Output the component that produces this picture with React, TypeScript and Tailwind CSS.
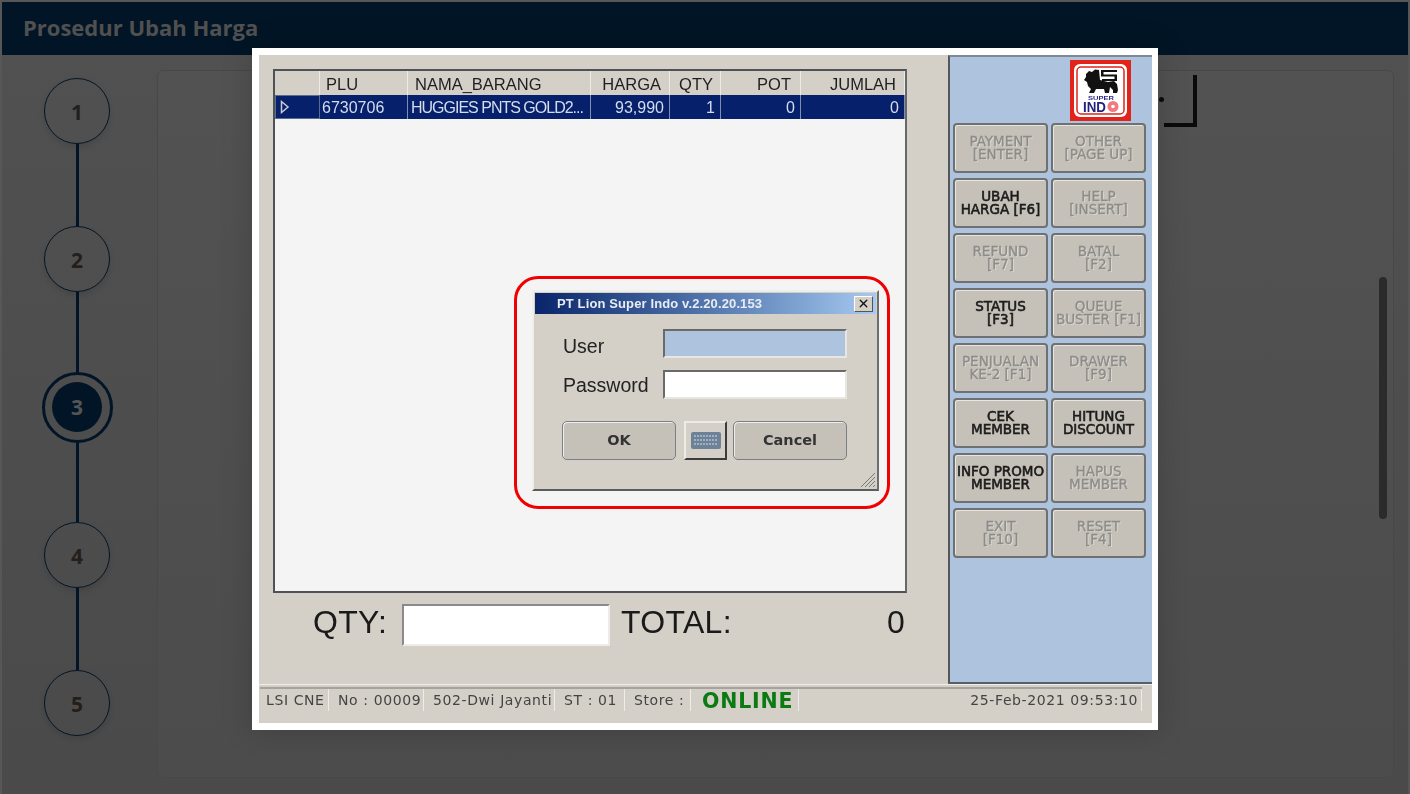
import { X } from "lucide-react";

const steps = [1, 2, 3, 4, 5];

const columns = [
  { label: "PLU", value: "6730706", width: "w-[88px]", head: "text-left pl-[6px]", cell: "text-left pl-[2px] pr-[2px]" },
  { label: "NAMA_BARANG", value: "HUGGIES PNTS GOLD2...", width: "w-[183px]", head: "text-left pl-[7px]", cell: "text-left pl-[3px] tracking-[-1px]" },
  { label: "HARGA", value: "93,990", width: "w-[79px]", head: "text-right pr-[8px]", cell: "text-right pr-[5px]" },
  { label: "QTY", value: "1", width: "w-[51px]", head: "text-right pr-[7px]", cell: "text-right pr-[5px]" },
  { label: "POT", value: "0", width: "w-[80px]", head: "text-right pr-[9px]", cell: "text-right pr-[5px]" },
  { label: "JUMLAH", value: "0", width: "w-[104px]", head: "text-right pr-[8px]", cell: "text-right pr-[5px]" },
];

const buttons = [
  { top: "PAYMENT", bottom: "[ENTER]", on: false },
  { top: "OTHER", bottom: "[PAGE UP]", on: false },
  { top: "UBAH", bottom: "HARGA [F6]", on: true },
  { top: "HELP", bottom: "[INSERT]", on: false },
  { top: "REFUND", bottom: "[F7]", on: false },
  { top: "BATAL", bottom: "[F2]", on: false },
  { top: "STATUS", bottom: "[F3]", on: true },
  { top: "QUEUE", bottom: "BUSTER [F1]", on: false },
  { top: "PENJUALAN", bottom: "KE-2 [F1]", on: false },
  { top: "DRAWER", bottom: "[F9]", on: false },
  { top: "CEK", bottom: "MEMBER", on: true },
  { top: "HITUNG", bottom: "DISCOUNT", on: true },
  { top: "INFO PROMO", bottom: "MEMBER", on: true },
  { top: "HAPUS", bottom: "MEMBER", on: false },
  { top: "EXIT", bottom: "[F10]", on: false },
  { top: "RESET", bottom: "[F4]", on: false },
];

const statusPanes = [
  { text: "LSI CNE", width: "w-[69px] pl-[6px]" },
  { text: "No : 00009", width: "w-[95px] pl-[9px]" },
  { text: "502-Dwi Jayanti", width: "w-[131px] pl-[9px]" },
  { text: "ST : 01", width: "w-[70px] pl-[9px]" },
  { text: "Store :", width: "w-[66px] pl-[9px]" },
];

const Step = ({ n }: { n: number }) => {
  if (n === 3) {
    return (
      <div className="w-[66px] h-[66px] flex items-center justify-center shrink-0">
        <div className="w-[71px] h-[71px] shrink-0 rounded-full border-[3px] border-[#021526] flex items-center justify-center">
          <div className="w-[50px] h-[50px] rounded-full bg-[#021526] flex items-center justify-center pt-[2px] text-[21px] font-bold text-[#545454]">
            3
          </div>
        </div>
      </div>
    );
  }
  return (
    <div className="w-[66px] h-[66px] shrink-0 rounded-full border border-[#021526] shadow-[0_3px_6px_rgba(0,0,0,0.12)] flex items-center justify-center pt-[3px] text-[21px] font-bold text-[#231f1c]">
      {n}
    </div>
  );
};

const Logo = () => (
  <svg width="61" height="61" viewBox="0 0 61 61" className="block">
    <rect width="61" height="61" fill="#e2231a" />
    <rect x="4" y="4" width="53" height="53" rx="6" fill="#ffffff" />
    <rect x="7" y="7" width="47" height="47" rx="4" fill="none" stroke="#e2231a" strokeWidth="1.5" />
    <path
      d="M16 14L19 11L22 12L25 9.500L29 10L30 20L38 22L44 21L47 24L48 30L47 33L43 33L43 30L40 27L39 33L35 33L34 29L26 29L24 33L19 33L21 29L18 26L17 22L14 20L16 17Z"
      fill="#111111"
    />
    <path d="M31 10H47V12H33.500V14.500H47V21H32V19H44.500V16.500H31Z" fill="#111111" />
    <text
      x="18"
      y="39.500"
      fontSize="6"
      fontWeight="700"
      fill="#2a2a86"
      textLength="26"
      lengthAdjust="spacingAndGlyphs"
      fontFamily="Liberation Sans, sans-serif"
    >
      SUPER
    </text>
    <text
      x="13"
      y="52"
      fontSize="14.500"
      fontWeight="700"
      fill="#23237f"
      textLength="23"
      lengthAdjust="spacingAndGlyphs"
      fontFamily="Liberation Sans, sans-serif"
    >
      IND
    </text>
    <circle cx="43" cy="46.500" r="5.500" fill="#ef7a80" />
    <circle cx="43" cy="46.500" r="1.800" fill="#ffffff" />
  </svg>
);

const KeyboardIcon = () => (
  <svg width="30" height="17" viewBox="0 0 30 17" className="block">
    <rect width="30" height="17" rx="2" fill="#6d8296" />
    {[3, 7, 11].map((y) =>
      [3, 6, 9, 12, 15, 18, 21, 24].map((x) => (
        <rect key={`${x}-${y}`} x={x} y={y} width="2" height="2" fill="#9fb0c0" />
      )),
    )}
  </svg>
);

const Grip = () => (
  <svg width="16" height="16" viewBox="0 0 16 16" className="block">
    <path d="M1 15L15 1M5 15L15 5M9 15l6-6M13 15l2-2" stroke="#777" strokeWidth="1" fill="none" />
  </svg>
);

const LoginDialog = () => (
  <div className="absolute left-[255px] top-[221px] w-[376px] h-[233px] rounded-[24px] border-[3px] border-[#f00000] pl-[15px] pt-[11px]">
    <div className="w-[347px] h-[201px] bg-[#d4d0c8] border-2 border-t-[#f0eee9] border-l-[#f0eee9] border-r-[#6e6e6e] border-b-[#5c5c5c] relative px-[1px] pt-[1px]">
      <div className="h-[21px] bg-gradient-to-r from-[#0a246a] to-[#a6caf0] flex items-center justify-between pl-[22px] pr-[3px]">
        <span className="text-[13px] tracking-[0.12px] font-bold text-[#e8ecf4] whitespace-nowrap">
          PT Lion Super Indo v.2.20.20.153
        </span>
        <span className="w-[19px] h-[16px] bg-[#d4d0c8] border border-t-white border-l-white border-r-[#555] border-b-[#555] flex items-center justify-center">
          <X size={13} strokeWidth={2.5} color="#111" />
        </span>
      </div>
      <div className="pl-[27px] pt-[15px]">
        <div className="flex items-center h-[29px]">
          <span className="w-[101px] pl-[1px] pt-[5px] text-[19.500px] leading-[24px] text-[#222]">User</span>
          <span className="w-[184px] h-[29px] bg-[#aec3de] border-2 border-t-[#6a6a6a] border-l-[#6a6a6a] border-r-[#e8e6e1] border-b-[#e8e6e1]" />
        </div>
        <div className="flex items-center h-[29px] mt-[12px]">
          <span className="w-[101px] pl-[1px] pt-[1px] text-[19.500px] leading-[24px] text-[#222]">Password</span>
          <span className="w-[184px] h-[29px] bg-white border-2 border-t-[#6a6a6a] border-l-[#6a6a6a] border-r-[#e8e6e1] border-b-[#e8e6e1]" />
        </div>
        <div className="flex items-center mt-[22px]">
          <div className="w-[114px] h-[39px] rounded-[5px] bg-[#c5c1b9] border border-[#7a7f85] shadow-[inset_1px_1px_0_#eeeeea] flex items-center justify-center text-[14.500px] font-bold text-[#333] font-['DejaVu_Sans',sans-serif]">
            OK
          </div>
          <div className="w-[43px] h-[39px] ml-[8px] bg-[#d4d0c8] border-2 border-t-[#ecebe6] border-l-[#ecebe6] border-r-[#3c3c3c] border-b-[#3c3c3c] flex items-center justify-center">
            <KeyboardIcon />
          </div>
          <div className="w-[114px] h-[39px] ml-[6px] rounded-[5px] bg-[#c5c1b9] border border-[#7a7f85] shadow-[inset_1px_1px_0_#eeeeea] flex items-center justify-center text-[14.500px] font-bold text-[#333] font-['DejaVu_Sans',sans-serif]">
            Cancel
          </div>
        </div>
      </div>
      <div className="absolute right-[1px] bottom-[1px]">
        <Grip />
      </div>
    </div>
  </div>
);

const PosScreen = () => (
  <div className="w-[893px] h-[668px] bg-[#d4d0c8] relative flex flex-col font-['Liberation_Sans',sans-serif] blur-[0.5px]">
    <div className="h-[629px] flex shrink-0">
      <div className="w-[689px] pl-[14px] pt-[14px]">
        <div className="w-[634px] h-[524px] border-2 border-[#4f5254] border-r-[#66696b] bg-[#f4f4f4]">
          <div className="flex h-[24px] bg-[#d4d0c8]">
            <div className="w-[45px] border-r border-[#ecebe6]" />
            {columns.map((c) => (
              <div
                key={c.label}
                className={`${c.width} ${c.head} border-r border-[#ecebe6] pt-[1px] text-[16.500px] leading-[24px] text-[#1f1f1f] whitespace-nowrap`}
              >
                {c.label}
              </div>
            ))}
          </div>
          <div className="flex h-[24px] bg-[#06206c]">
            <div className="w-[45px] border border-[#5a6c90] flex items-center pl-[4px]">
              <svg width="10" height="14" viewBox="0 0 10 14">
                <path d="M1.500 1.500L8 7l-6.500 5.500z" fill="#06206c" stroke="#c8ccd0" strokeWidth="1.500" />
              </svg>
            </div>
            {columns.map((c) => (
              <div
                key={c.label}
                className={`${c.width} ${c.cell} border-r border-[#7f8db0] pt-[1px] text-[16px] leading-[24px] text-[#d5dcea] whitespace-nowrap overflow-hidden`}
              >
                {c.value}
              </div>
            ))}
          </div>
        </div>
        <div className="flex items-center h-[42px] mt-[11px] w-[634px] pl-[40px] text-[32px] leading-[36px] tracking-[0.3px] text-[#1a1a1a]">
          <span className="w-[89px] -mt-[7px]">QTY:</span>
          <span className="w-[208px] h-[42px] bg-white border-2 border-t-[#8a8a8a] border-l-[#8a8a8a] border-r-[#eeece8] border-b-[#eeece8]" />
          <span className="ml-[11px] -mt-[7px]">TOTAL:</span>
          <span className="ml-auto -mt-[7px] pr-[2px]">0</span>
        </div>
      </div>
      <div className="w-[204px] bg-[#aec3de] border-l-2 border-l-[#55585a] border-t-2 border-t-[#7d8a96] border-b-2 border-b-[#55606c] pl-[3px]">
        <div className="flex justify-end pr-[21px] pt-[3px]">
          <Logo />
        </div>
        <div className="grid grid-cols-[95px_95px] gap-x-[3px] gap-y-[5px] mt-[2px]">
          {buttons.map((b) => (
            <div
              key={b.top}
              className={`h-[50px] rounded-[4px] bg-[#c5c1b9] border-2 border-[#6f7072] shadow-[inset_1px_1px_0_#e8e6e0] flex items-center justify-center text-center text-[13.500px] leading-[13px] font-['DejaVu_Sans',sans-serif] whitespace-nowrap ${
                b.on
                  ? "text-[#1c1c1c] [-webkit-text-stroke:0.6px_#1c1c1c]"
                  : "text-[#8e8c88] [-webkit-text-stroke:0.3px_#8e8c88] [text-shadow:1px_1px_0_#dcdad4]"
              }`}
            >
              <p>
                {b.top}
                <br />
                {b.bottom}
              </p>
            </div>
          ))}
        </div>
      </div>
    </div>
    <div className="flex-1 border-t border-[#f0eee9] px-[1px] pt-[2px] font-['DejaVu_Sans',sans-serif] text-[14px] tracking-[0.6px] text-[#444] whitespace-nowrap">
      <div className="flex h-[24px] w-[882px] border-t-2 border-[#a5a39d] leading-[22px]">
        {statusPanes.map((p) => (
          <div key={p.text} className={`${p.width} border-r border-[#eeece8]`}>
            {p.text}
          </div>
        ))}
        <div className="w-[108px] border-r border-[#eeece8] pl-[11px] text-[20.500px] leading-[24px] font-bold text-[#0b7a12] tracking-[0.8px]">
          ONLINE
        </div>
        <div className="flex-1 border-r border-[#eeece8] pr-[3px] text-right">25-Feb-2021 09:53:10</div>
      </div>
    </div>
    <LoginDialog />
  </div>
);

export default function App() {
  return (
    <div className="w-[1410px] h-[794px] relative overflow-hidden border-2 border-b-0 border-[#575757] bg-gradient-to-b from-[#515151] to-[#4a4a4a] font-['Open_Sans',sans-serif]">
      <header className="h-[53px] bg-[#021526] pl-[21px] pb-[2px] flex items-center text-[22px] font-bold text-[#505050]">
        Prosedur Ubah Harga
      </header>
      <div className="flex">
        <nav className="w-[150px] flex flex-col items-center pt-[23px]">
          {steps.map((n) => (
            <div key={n} className="flex flex-col items-center">
              <Step n={n} />
              {n < 5 && <div className="w-[3px] h-[82px] bg-[#021526]" />}
            </div>
          ))}
        </nav>
        <main className="w-[1237px] h-[708px] ml-[5px] mt-[15px] rounded-[6px] border border-[#484848] bg-gradient-to-b from-[#525252] to-[#4c4c4c] relative">
          <div className="absolute left-[1001px] top-[26px] w-[5px] h-[5px] rounded-full bg-[#0a0a0a]" />
          <div className="absolute left-[1006px] top-[4px] w-[33px] h-[52px] border-r-[4px] border-b-[4px] border-[#0a0a0a]" />
          <div className="absolute left-[1221px] top-[206px] w-[8px] h-[242px] rounded-full bg-[#2b2b2b]" />
        </main>
      </div>
      <div className="absolute left-[250px] top-[46px] w-[906px] h-[682px] bg-white pl-[7px] pt-[7px] shadow-[0_0_30px_rgba(0,0,0,0.18)]">
        <PosScreen />
      </div>
    </div>
  );
}
